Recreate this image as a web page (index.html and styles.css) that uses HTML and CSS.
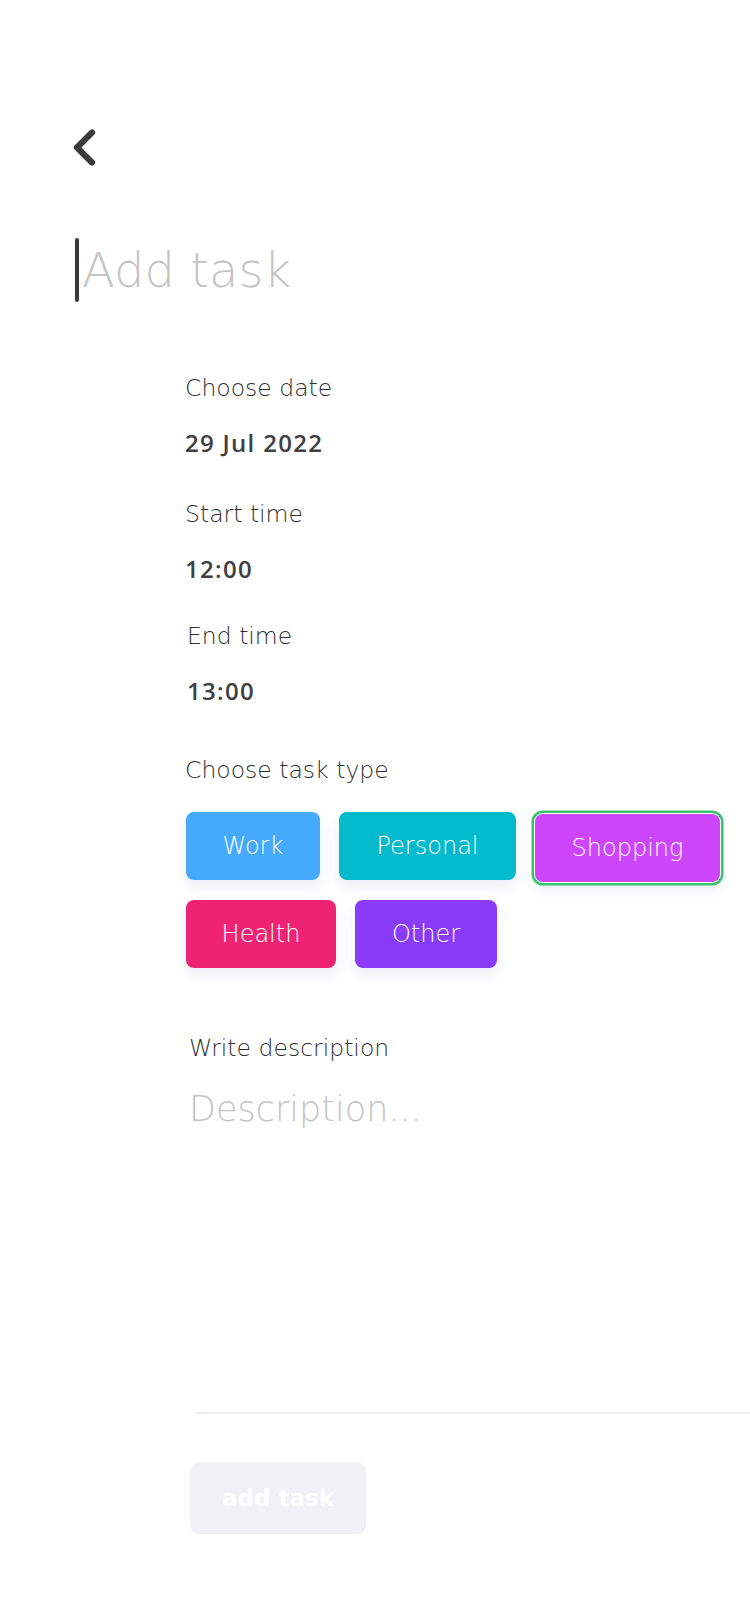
FILE: index.html
```html
<!DOCTYPE html>
<html>
<head>
<meta charset="utf-8">
<link rel="stylesheet" href="styles.css">
</head>
<body>
<div class="page">
  <div class="back">
    <svg width="24" height="37" viewBox="0 0 24 37"><path d="M20 3.5 L5 18.5 L20 33.5" fill="none" stroke="#3b3b3b" stroke-width="6.2" stroke-linecap="round" stroke-linejoin="round"/></svg>
  </div>
  <div class="title-row">
    <span class="cursor"></span>
    <span class="title">Add task</span>
  </div>
  <div class="form">
    <div class="field f-date">
      <div class="label">Choose date</div>
      <div class="value">29 Jul 2022</div>
    </div>
    <div class="field f-start">
      <div class="label">Start time</div>
      <div class="value">12:00</div>
    </div>
    <div class="field f-end">
      <div class="label">End time</div>
      <div class="value">13:00</div>
    </div>
    <div class="types">
      <div class="label">Choose task type</div>
      <div class="chips">
        <div class="chip chip-work">Work</div>
        <div class="chip chip-personal">Personal</div>
        <div class="chip chip-shopping selected">Shopping</div>
        <div class="chip chip-health">Health</div>
        <div class="chip chip-other">Other</div>
      </div>
    </div>
    <div class="desc">
      <div class="label">Write description</div>
      <div class="desc-input">Description...</div>
    </div>
    <div class="divider"></div>
    <div class="submit">add task</div>
  </div>
</div>
</body>
</html>
```
FILE: styles.css
```css
html, body {
  margin: 0;
  padding: 0;
  background: #ffffff;
}
body {
  width: 750px;
  height: 1624px;
  overflow: hidden;
  font-family: "DejaVu Sans", "Open Sans", sans-serif;
  color: #3d3d3d;
}
.page {
  padding: 129px 0 0 73px;
}
.back {
  height: 37px;
  margin-left: -1px;
}
.back svg {
  display: block;
}
.title-row {
  margin-top: 72px;
  height: 64px;
  display: flex;
  align-items: center;
}
.cursor {
  width: 4px;
  height: 64px;
  margin-left: 2px;
  background: #3a3a3a;
  border-radius: 2px;
}
.title {
  margin-left: 3px;
  font-size: 48px;
  font-weight: 300;
  line-height: 64px;
  color: #c4c4c4;
}
.form {
  margin-top: 71px;
  padding-left: 112px;
}
.label {
  font-size: 23.5px;
  font-weight: 300;
  line-height: 30px;
  color: #2e2e2e;
}
.value {
  margin-top: 25px;
  font-family: "Open Sans", "DejaVu Sans", sans-serif;
  font-size: 24px;
  font-weight: 600;
  letter-spacing: 1.3px;
  line-height: 30px;
  color: #404040;
}
.f-start {
  margin-top: 41px;
}
.f-end {
  margin-top: 37px;
  padding-left: 2px;
}
.types {
  margin-top: 49px;
}
.chips {
  margin-top: 27px;
  margin-left: 1px;
  display: flex;
  flex-wrap: wrap;
  align-items: flex-start;
  column-gap: 19px;
  row-gap: 18px;
  width: 560px;
}
.chip {
  height: 68px;
  border-radius: 8px;
  display: flex;
  align-items: center;
  justify-content: center;
  color: #ffffff;
  font-size: 24px;
  font-weight: 300;
  box-shadow: 0 7px 14px rgba(90, 120, 170, 0.13);
}
.chip-work { width: 134px; background: #45a9fc; }
.chip-personal { width: 177px; background: #02bacd; }
.chip-shopping { width: 185px; background: #cd45fd; }
.chip-health { width: 150px; background: #ef2373; }
.chip-other { width: 142px; background: #8a3bf8; }
.chip.selected {
  margin-top: 2px;
  box-shadow: 0 0 0 1px #ffffff, 0 0 0 3.5px #37c46b, 0 8px 14px rgba(90, 120, 170, 0.13);
}
.desc {
  margin-top: 65px;
  padding-left: 4px;
}
.desc-input {
  margin-top: 24px;
  height: 325px;
  font-size: 35px;
  font-weight: 300;
  line-height: 44px;
  color: #c4c4c4;
}
.divider {
  margin-left: 11px;
  height: 2px;
  background: #ededf3;
}
.submit {
  margin-top: 48px;
  margin-left: 5px;
  width: 176px;
  height: 72px;
  border-radius: 9px;
  background: #f0f0f5;
  color: #ffffff;
  font-size: 23px;
  font-weight: 700;
  display: flex;
  align-items: center;
  justify-content: center;
}
```
